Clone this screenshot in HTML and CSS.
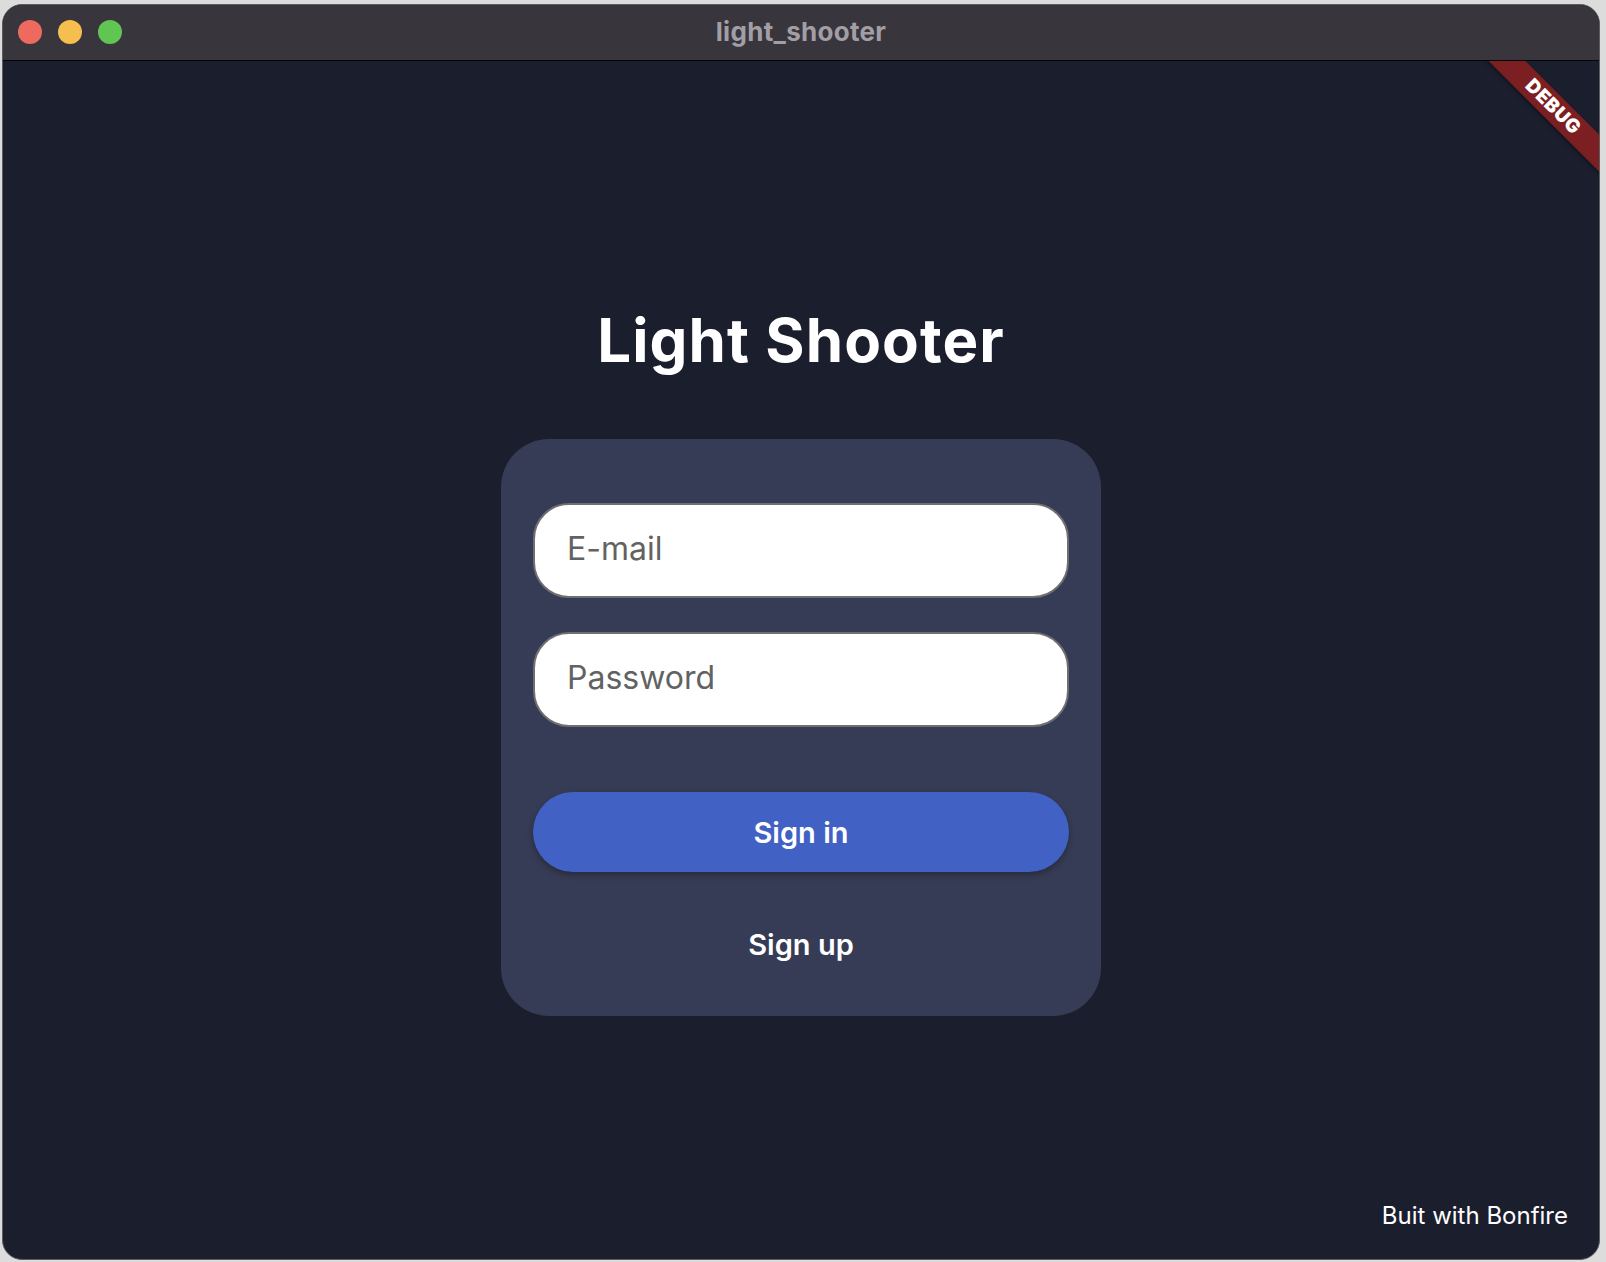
FILE: index.html
```html
<!DOCTYPE html>
<html lang="en">
<head>
<meta charset="utf-8">
<title>light_shooter</title>
<link rel="stylesheet" href="styles.css">
</head>
<body>
<div class="window">
  <header class="titlebar">
    <div class="lights">
      <span class="light red"></span>
      <span class="light yellow"></span>
      <span class="light green"></span>
    </div>
    <div class="wtitle">light_shooter</div>
    <div></div>
  </header>
  <main class="content">
    <h1 class="apptitle">Light Shooter</h1>
    <section class="card">
      <input class="field" type="text" placeholder="E-mail">
      <input class="field field-gap" type="password" placeholder="Password">
      <button class="signin">Sign in</button>
      <button class="signup">Sign up</button>
    </section>
    <div class="footer">Buit with Bonfire</div>
    <div class="debug">DEBUG</div>
  </main>
</div>
</body>
</html>
```
FILE: styles.css
```css
* { box-sizing: border-box; }
html, body { margin: 0; }
body {
  background: #dcdcdc;
  padding: 4px 0 0 2px;
  width: 1606px;
  height: 1262px;
  overflow: hidden;
  font-family: Inter, "Noto Sans", sans-serif;
}
.window {
  width: 1598px;
  height: 1256px;
  border: 1px solid #5c5c60;
  border-radius: 20px;
  overflow: hidden;
  display: flex;
  flex-direction: column;
  background: #1b1e2d;
}
.titlebar {
  height: 56px;
  flex: none;
  background: #38353c;
  border-bottom: 1px solid #050505;
  display: grid;
  grid-template-columns: 1fr auto 1fr;
  align-items: center;
}
.lights {
  display: flex;
  gap: 16px;
  padding-left: 15px;
  padding-bottom: 1px;
}
.light {
  width: 24px;
  height: 24px;
  border-radius: 50%;
  display: block;
}
.red { background: #ee6a5f; }
.yellow { background: #f5be4f; }
.green { background: #61c554; }
.wtitle {
  color: #a29ea6;
  font-size: 26px;
  font-weight: 700;
  letter-spacing: 0.3px;
  padding-bottom: 2px;
}
.content {
  flex: 1;
  position: relative;
  overflow: hidden;
  display: flex;
  flex-direction: column;
  align-items: center;
  padding: 243px 31px 29px 31px;
}
.apptitle {
  margin: 0;
  color: #ffffff;
  font-size: 60px;
  line-height: 72px;
  font-weight: 700;
  letter-spacing: 1.1px;
}
.card {
  margin-top: 63px;
  width: 600px;
  background: #363c55;
  border-radius: 48px;
  padding: 64px 32px 32px;
  display: flex;
  flex-direction: column;
}
.field {
  height: 95px;
  width: 100%;
  border: 2px solid #6f6f72;
  border-radius: 36px;
  background: #ffffff;
  padding: 0 0 4px 32px;
  font-family: Inter, "Noto Sans", sans-serif;
  font-size: 32px;
  color: #333;
  outline: none;
}
.field::placeholder { color: #626262; }
.field-gap { margin-top: 34px; }
.signin {
  margin-top: 65px;
  height: 80px;
  border: 0;
  border-radius: 40px;
  background: #4162c4;
  color: #ffffff;
  font-family: Inter, "Noto Sans", sans-serif;
  font-size: 29px;
  font-weight: 600;
  box-shadow: 0 3px 6px rgba(0, 0, 0, 0.3);
}
.signup {
  margin-top: 32px;
  height: 80px;
  border: 0;
  background: transparent;
  color: #ffffff;
  font-family: Inter, "Noto Sans", sans-serif;
  font-size: 29px;
  font-weight: 600;
}
.footer {
  margin-top: auto;
  align-self: flex-end;
  color: #ffffff;
  font-size: 24px;
  line-height: 29px;
}
.debug {
  position: absolute;
  top: 33px;
  right: -65px;
  width: 222px;
  height: 26px;
  transform: rotate(45deg);
  background: #7c1f23;
  color: #ffffff;
  font-size: 19px;
  font-weight: 900;
  line-height: 26px;
  text-align: center;
  letter-spacing: 0.6px;
  box-shadow: 0 2px 4px rgba(0, 0, 0, 0.35);
}
```
